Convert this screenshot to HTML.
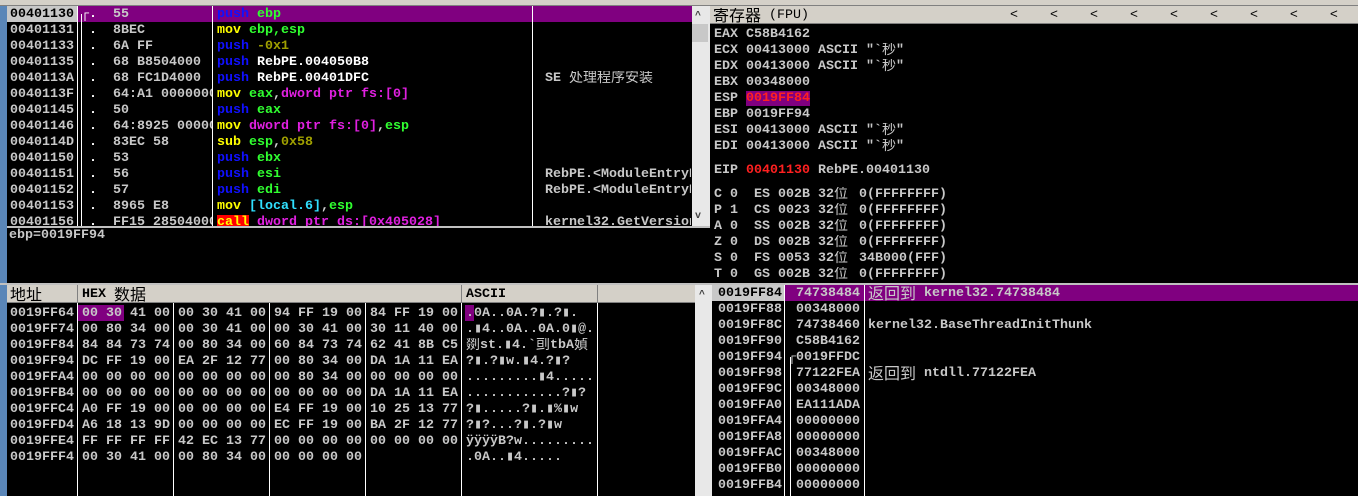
<!DOCTYPE html>
<html><head><meta charset="utf-8"><style>
*{margin:0;padding:0;box-sizing:border-box}
body{width:1358px;height:496px;background:#000;position:relative;overflow:hidden;font:bold 13.33px/16px "Liberation Mono","Noto Sans CJK SC",monospace;color:#d0d0d0}
.a{position:absolute;white-space:pre;overflow:hidden;height:16px;transform:translateY(1px)}
.b{position:absolute}
.g{color:#c8c8c8}.w{color:#fff}.bl{color:#1010ff}.gr{color:#30ff30}.y{color:#ffff00}.m{color:#e020e0}.o{color:#a0a000}.c{color:#30e0ff}.r{color:#ff2020}
.cj{font-family:"Noto Sans CJK SC",sans-serif;font-weight:normal;font-size:14px;line-height:16px;vertical-align:top;display:inline-block;height:16px;margin-top:-2px}
</style></head><body>
<div class="b" style="left:0;top:0;width:1358px;height:6px;background:#d4d0c8;border-bottom:1px solid #808080"></div>
<div class="b" style="left:0;top:6px;width:7px;height:490px;background:#5a86b8"></div>

<div class="b" style="left:7px;top:6px;width:685px;height:220px;background:#000;overflow:hidden">
<div class="b" style="left:0;top:0;width:685px;height:16px;background:#800080"></div>
<div class="b" style="left:0;top:0;width:70px;height:16px;background:#c8c8c8"></div>
<div class="b" style="left:70px;top:0;width:1px;height:220px;background:#fff"></div>
<div class="b" style="left:74px;top:8px;width:1px;height:212px;background:#fff"></div>
<div class="b" style="left:205px;top:0;width:1px;height:220px;background:#fff"></div>
<div class="b" style="left:525px;top:0;width:1px;height:220px;background:#fff"></div>
</div>
<div class="b" style="left:7px;top:226px;width:703px;height:2px;background:#c0c0c0"></div>
<div class="a" style="left:10px;top:6px;color:#000">00401130</div><div class="a w" style="left:81px;top:6px">┌.</div><div class="a g" style="left:113px;top:6px">55</div><div class="a" style="left:217px;top:6px"><span class="bl">push</span> <span class="gr">ebp</span></div>
<div class="a g" style="left:10px;top:22px">00401131</div><div class="a w" style="left:89px;top:22px">.</div><div class="a g" style="left:113px;top:22px">8BEC</div><div class="a" style="left:217px;top:22px"><span class="y">mov</span> <span class="gr">ebp,esp</span></div>
<div class="a g" style="left:10px;top:38px">00401133</div><div class="a w" style="left:89px;top:38px">.</div><div class="a g" style="left:113px;top:38px">6A FF</div><div class="a" style="left:217px;top:38px"><span class="bl">push</span> <span class="o">-0x1</span></div>
<div class="a g" style="left:10px;top:54px">00401135</div><div class="a w" style="left:89px;top:54px">.</div><div class="a g" style="left:113px;top:54px">68 B8504000</div><div class="a" style="left:217px;top:54px"><span class="bl">push</span> <span class="w">RebPE.004050B8</span></div>
<div class="a g" style="left:10px;top:70px">0040113A</div><div class="a w" style="left:89px;top:70px">.</div><div class="a g" style="left:113px;top:70px">68 FC1D4000</div><div class="a" style="left:217px;top:70px"><span class="bl">push</span> <span class="w">RebPE.00401DFC</span></div><div class="a g" style="left:545px;top:70px">SE <span class="cj">处理程序安装</span></div>
<div class="a g" style="left:10px;top:86px">0040113F</div><div class="a w" style="left:89px;top:86px">.</div><div class="a g" style="left:113px;top:86px;width:99px">64:A1 00000000</div><div class="a" style="left:217px;top:86px"><span class="y">mov</span> <span class="gr">eax</span>,<span class="m">dword ptr fs:[0]</span></div>
<div class="a g" style="left:10px;top:102px">00401145</div><div class="a w" style="left:89px;top:102px">.</div><div class="a g" style="left:113px;top:102px">50</div><div class="a" style="left:217px;top:102px"><span class="bl">push</span> <span class="gr">eax</span></div>
<div class="a g" style="left:10px;top:118px">00401146</div><div class="a w" style="left:89px;top:118px">.</div><div class="a g" style="left:113px;top:118px;width:99px">64:8925 00000000</div><div class="a" style="left:217px;top:118px"><span class="y">mov</span> <span class="m">dword ptr fs:[0]</span>,<span class="gr">esp</span></div>
<div class="a g" style="left:10px;top:134px">0040114D</div><div class="a w" style="left:89px;top:134px">.</div><div class="a g" style="left:113px;top:134px">83EC 58</div><div class="a" style="left:217px;top:134px"><span class="y">sub</span> <span class="gr">esp</span>,<span class="o">0x58</span></div>
<div class="a g" style="left:10px;top:150px">00401150</div><div class="a w" style="left:89px;top:150px">.</div><div class="a g" style="left:113px;top:150px">53</div><div class="a" style="left:217px;top:150px"><span class="bl">push</span> <span class="gr">ebx</span></div>
<div class="a g" style="left:10px;top:166px">00401151</div><div class="a w" style="left:89px;top:166px">.</div><div class="a g" style="left:113px;top:166px">56</div><div class="a" style="left:217px;top:166px"><span class="bl">push</span> <span class="gr">esi</span></div><div class="a g" style="left:545px;top:166px;width:146px">RebPE.&lt;ModuleEntryPoint&gt;</div>
<div class="a g" style="left:10px;top:182px">00401152</div><div class="a w" style="left:89px;top:182px">.</div><div class="a g" style="left:113px;top:182px">57</div><div class="a" style="left:217px;top:182px"><span class="bl">push</span> <span class="gr">edi</span></div><div class="a g" style="left:545px;top:182px;width:146px">RebPE.&lt;ModuleEntryPoint&gt;</div>
<div class="a g" style="left:10px;top:198px">00401153</div><div class="a w" style="left:89px;top:198px">.</div><div class="a g" style="left:113px;top:198px">8965 E8</div><div class="a" style="left:217px;top:198px"><span class="y">mov</span> <span class="c">[local.6]</span>,<span class="gr">esp</span></div>
<div class="a g" style="left:10px;top:214px;height:11px">00401156</div><div class="a w" style="left:89px;top:214px;height:11px">.</div><div class="a g" style="left:113px;top:214px;width:99px;height:11px">FF15 28504000</div><div class="a" style="left:217px;top:214px;height:11px"><span class="y" style="background:#ff0000">call</span> <span class="m">dword ptr ds:[0x405028]</span></div><div class="a g" style="left:545px;top:214px;width:146px;height:11px">kernel32.GetVersion</div>
<div class="b" style="left:692px;top:6px;width:18px;height:220px;background:#e8e8e8"></div>
<div class="b" style="left:692px;top:24px;width:16px;height:18px;background:#c8c8c8"></div>
<div class="a" style="left:695px;top:8px;color:#404040;font-size:10px">^</div>
<div class="a" style="left:695px;top:208px;color:#404040;font-size:10px">v</div>

<div class="b" style="left:7px;top:228px;width:703px;height:55px;background:#000"></div>
<div class="a g" style="left:9px;top:227px">ebp=0019FF94</div>
<div class="b" style="left:0;top:283px;width:712px;height:2px;background:#c0c0c0"></div>

<div class="b" style="left:710px;top:6px;width:648px;height:18px;background:#d4d0c8;border-bottom:1px solid #808080"></div>
<div class="a" style="left:713px;top:7px;color:#000;font-weight:normal"><span class="cj" style="font-size:16px">寄存器</span> (FPU)</div>
<div class="a" style="left:1010px;top:7px;color:#000;font-weight:normal;white-space:pre">&lt;    &lt;    &lt;    &lt;    &lt;    &lt;    &lt;    &lt;    &lt;</div>
<div class="b" style="left:710px;top:24px;width:3px;height:259px;background:#000"></div>
<div class="a g" style="left:714px;top:26px">EAX C58B4162</div>
<div class="a g" style="left:714px;top:42px">ECX 00413000 ASCII "`<span class="cj">秒</span>"</div>
<div class="a g" style="left:714px;top:58px">EDX 00413000 ASCII "`<span class="cj">秒</span>"</div>
<div class="a g" style="left:714px;top:74px">EBX 00348000</div>
<div class="a g" style="left:714px;top:90px">ESP <span class="r" style="background:#800080">0019FF84</span></div>
<div class="a g" style="left:714px;top:106px">EBP 0019FF94</div>
<div class="a g" style="left:714px;top:122px">ESI 00413000 ASCII "`<span class="cj">秒</span>"</div>
<div class="a g" style="left:714px;top:138px">EDI 00413000 ASCII "`<span class="cj">秒</span>"</div>
<div class="a g" style="left:714px;top:162px">EIP <span class="r">00401130</span> RebPE.00401130</div>
<div class="a g" style="left:714px;top:186px">C 0  ES 002B 32<span class="cj">位</span></div><div class="a g" style="left:859px;top:186px">0(FFFFFFFF)</div>
<div class="a g" style="left:714px;top:202px">P 1  CS 0023 32<span class="cj">位</span></div><div class="a g" style="left:859px;top:202px">0(FFFFFFFF)</div>
<div class="a g" style="left:714px;top:218px">A 0  SS 002B 32<span class="cj">位</span></div><div class="a g" style="left:859px;top:218px">0(FFFFFFFF)</div>
<div class="a g" style="left:714px;top:234px">Z 0  DS 002B 32<span class="cj">位</span></div><div class="a g" style="left:859px;top:234px">0(FFFFFFFF)</div>
<div class="a g" style="left:714px;top:250px">S 0  FS 0053 32<span class="cj">位</span></div><div class="a g" style="left:859px;top:250px">34B000(FFF)</div>
<div class="a g" style="left:714px;top:266px">T 0  GS 002B 32<span class="cj">位</span></div><div class="a g" style="left:859px;top:266px">0(FFFFFFFF)</div>
<div class="b" style="left:710px;top:283px;width:648px;height:2px;background:#c0c0c0"></div>

<div class="b" style="left:7px;top:285px;width:688px;height:18px;background:#d4d0c8;border-bottom:1px solid #808080"></div>
<div class="b" style="left:77px;top:285px;width:1px;height:18px;background:#808080"></div>
<div class="b" style="left:461px;top:285px;width:1px;height:18px;background:#808080"></div>
<div class="b" style="left:597px;top:285px;width:1px;height:18px;background:#808080"></div>
<div class="a" style="left:10px;top:286px;color:#000;font-weight:normal"><span class="cj" style="font-size:16px">地址</span></div>
<div class="a" style="left:82px;top:286px;color:#000">HEX <span class="cj" style="font-size:16px">数据</span></div>
<div class="a" style="left:466px;top:286px;color:#000">ASCII</div>
<div class="b" style="left:77px;top:303px;width:1px;height:193px;background:#fff"></div>
<div class="b" style="left:173px;top:303px;width:1px;height:193px;background:#fff"></div>
<div class="b" style="left:269px;top:303px;width:1px;height:193px;background:#fff"></div>
<div class="b" style="left:365px;top:303px;width:1px;height:193px;background:#fff"></div>
<div class="b" style="left:461px;top:303px;width:1px;height:193px;background:#fff"></div>
<div class="b" style="left:597px;top:303px;width:1px;height:193px;background:#fff"></div>
<div class="b" style="left:78px;top:305px;width:46px;height:16px;background:#800080"></div>
<div class="b" style="left:465px;top:305px;width:9px;height:16px;background:#800080"></div>
<div class="a g" style="left:10px;top:305px">0019FF64</div><div class="a g" style="left:82px;top:305px">00 30 41 00</div><div class="a g" style="left:178px;top:305px">00 30 41 00</div><div class="a g" style="left:274px;top:305px">94 FF 19 00</div><div class="a g" style="left:370px;top:305px">84 FF 19 00</div><div class="a g" style="left:466px;top:305px">.0A..0A.?▮.?▮.</div>
<div class="a g" style="left:10px;top:321px">0019FF74</div><div class="a g" style="left:82px;top:321px">00 80 34 00</div><div class="a g" style="left:178px;top:321px">00 30 41 00</div><div class="a g" style="left:274px;top:321px">00 30 41 00</div><div class="a g" style="left:370px;top:321px">30 11 40 00</div><div class="a g" style="left:466px;top:321px">.▮4..0A..0A.0▮@.</div>
<div class="a g" style="left:10px;top:337px">0019FF84</div><div class="a g" style="left:82px;top:337px">84 84 73 74</div><div class="a g" style="left:178px;top:337px">00 80 34 00</div><div class="a g" style="left:274px;top:337px">60 84 73 74</div><div class="a g" style="left:370px;top:337px">62 41 8B C5</div><div class="a g" style="left:466px;top:337px"><span class="cj">剟</span>st.▮4.`<span class="cj">刯</span>tbA<span class="cj">媜</span></div>
<div class="a g" style="left:10px;top:353px">0019FF94</div><div class="a g" style="left:82px;top:353px">DC FF 19 00</div><div class="a g" style="left:178px;top:353px">EA 2F 12 77</div><div class="a g" style="left:274px;top:353px">00 80 34 00</div><div class="a g" style="left:370px;top:353px">DA 1A 11 EA</div><div class="a g" style="left:466px;top:353px">?▮.?▮w.▮4.?▮?</div>
<div class="a g" style="left:10px;top:369px">0019FFA4</div><div class="a g" style="left:82px;top:369px">00 00 00 00</div><div class="a g" style="left:178px;top:369px">00 00 00 00</div><div class="a g" style="left:274px;top:369px">00 80 34 00</div><div class="a g" style="left:370px;top:369px">00 00 00 00</div><div class="a g" style="left:466px;top:369px">.........▮4.....</div>
<div class="a g" style="left:10px;top:385px">0019FFB4</div><div class="a g" style="left:82px;top:385px">00 00 00 00</div><div class="a g" style="left:178px;top:385px">00 00 00 00</div><div class="a g" style="left:274px;top:385px">00 00 00 00</div><div class="a g" style="left:370px;top:385px">DA 1A 11 EA</div><div class="a g" style="left:466px;top:385px">............?▮?</div>
<div class="a g" style="left:10px;top:401px">0019FFC4</div><div class="a g" style="left:82px;top:401px">A0 FF 19 00</div><div class="a g" style="left:178px;top:401px">00 00 00 00</div><div class="a g" style="left:274px;top:401px">E4 FF 19 00</div><div class="a g" style="left:370px;top:401px">10 25 13 77</div><div class="a g" style="left:466px;top:401px">?▮.....?▮.▮%▮w</div>
<div class="a g" style="left:10px;top:417px">0019FFD4</div><div class="a g" style="left:82px;top:417px">A6 18 13 9D</div><div class="a g" style="left:178px;top:417px">00 00 00 00</div><div class="a g" style="left:274px;top:417px">EC FF 19 00</div><div class="a g" style="left:370px;top:417px">BA 2F 12 77</div><div class="a g" style="left:466px;top:417px">?▮?...?▮.?▮w</div>
<div class="a g" style="left:10px;top:433px">0019FFE4</div><div class="a g" style="left:82px;top:433px">FF FF FF FF</div><div class="a g" style="left:178px;top:433px">42 EC 13 77</div><div class="a g" style="left:274px;top:433px">00 00 00 00</div><div class="a g" style="left:370px;top:433px">00 00 00 00</div><div class="a g" style="left:466px;top:433px">ÿÿÿÿB?w.........</div>
<div class="a g" style="left:10px;top:449px">0019FFF4</div><div class="a g" style="left:82px;top:449px">00 30 41 00</div><div class="a g" style="left:178px;top:449px">00 80 34 00</div><div class="a g" style="left:274px;top:449px">00 00 00 00</div><div class="a g" style="left:466px;top:449px">.0A..▮4.....</div>
<div class="b" style="left:695px;top:285px;width:17px;height:211px;background:#e8e8e8"></div>
<div class="a" style="left:699px;top:287px;color:#404040;font-size:10px">^</div>

<div class="b" style="left:712px;top:285px;width:72px;height:16px;background:#c8c8c8"></div>
<div class="b" style="left:784px;top:285px;width:574px;height:16px;background:#800080"></div>
<div class="b" style="left:784px;top:285px;width:1px;height:211px;background:#fff"></div>
<div class="b" style="left:864px;top:285px;width:1px;height:211px;background:#fff"></div>
<div class="b" style="left:790px;top:357px;width:1px;height:139px;background:#fff"></div>
<div class="a" style="left:718px;top:285px;color:#000">0019FF84</div><div class="a g" style="left:796px;top:285px">74738484</div><div class="a g" style="left:868px;top:285px"><span class="cj" style="font-size:16px">返回到</span> kernel32.74738484</div>
<div class="a g" style="left:718px;top:301px">0019FF88</div><div class="a g" style="left:796px;top:301px">00348000</div>
<div class="a g" style="left:718px;top:317px">0019FF8C</div><div class="a g" style="left:796px;top:317px">74738460</div><div class="a g" style="left:868px;top:317px">kernel32.BaseThreadInitThunk</div>
<div class="a g" style="left:718px;top:333px">0019FF90</div><div class="a g" style="left:796px;top:333px">C58B4162</div>
<div class="a g" style="left:718px;top:349px">0019FF94</div><div class="a g" style="left:788px;top:349px">┌0019FFDC</div>
<div class="a g" style="left:718px;top:365px">0019FF98</div><div class="a g" style="left:796px;top:365px">77122FEA</div><div class="a g" style="left:868px;top:365px"><span class="cj" style="font-size:16px">返回到</span> ntdll.77122FEA</div>
<div class="a g" style="left:718px;top:381px">0019FF9C</div><div class="a g" style="left:796px;top:381px">00348000</div>
<div class="a g" style="left:718px;top:397px">0019FFA0</div><div class="a g" style="left:796px;top:397px">EA111ADA</div>
<div class="a g" style="left:718px;top:413px">0019FFA4</div><div class="a g" style="left:796px;top:413px">00000000</div>
<div class="a g" style="left:718px;top:429px">0019FFA8</div><div class="a g" style="left:796px;top:429px">00000000</div>
<div class="a g" style="left:718px;top:445px">0019FFAC</div><div class="a g" style="left:796px;top:445px">00348000</div>
<div class="a g" style="left:718px;top:461px">0019FFB0</div><div class="a g" style="left:796px;top:461px">00000000</div>
<div class="a g" style="left:718px;top:477px">0019FFB4</div><div class="a g" style="left:796px;top:477px">00000000</div>
</body></html>
